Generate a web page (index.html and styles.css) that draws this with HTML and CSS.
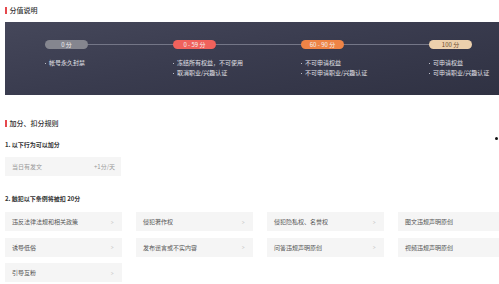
FILE: index.html
```html
<!DOCTYPE html>
<html lang="zh">
<head>
<meta charset="utf-8">
<link rel="stylesheet" href="styles.css">
</head>
<body>
<div class="page">
  <h2 class="sec-title first">分值说明</h2>
  <div class="panel">
    <div class="track"></div>
    <div class="stage">
      <span class="pill p-gray">0 分</span>
      <ul class="bullets">
        <li>帐号永久封禁</li>
      </ul>
    </div>
    <div class="stage">
      <span class="pill p-red">0 - 59 分</span>
      <ul class="bullets">
        <li>冻结所有权益，不可使用</li>
        <li>取消职业/兴趣认证</li>
      </ul>
    </div>
    <div class="stage">
      <span class="pill p-orange">60 - 90 分</span>
      <ul class="bullets">
        <li>不可申请权益</li>
        <li>不可申请职业/兴趣认证</li>
      </ul>
    </div>
    <div class="stage">
      <span class="pill p-gold">100 分</span>
      <ul class="bullets">
        <li>可申请权益</li>
        <li>可申请职业/兴趣认证</li>
      </ul>
    </div>
  </div>

  <h2 class="sec-title second">加分、扣分规则</h2>
  <h3 class="sub first-sub">1. 以下行为可以加分</h3>
  <div class="bonus">
    <span>当日有发文</span>
    <span>+1分/天</span>
  </div>

  <h3 class="sub second-sub">2. 触犯以下条例将被扣 20分</h3>
  <div class="rules">
    <div class="rule"><span>违反法律法规和相关政策</span><i class="chev">&gt;</i></div>
    <div class="rule"><span>侵犯著作权</span><i class="chev">&gt;</i></div>
    <div class="rule"><span>侵犯隐私权、名誉权</span><i class="chev">&gt;</i></div>
    <div class="rule"><span>图文违规声明原创</span><i class="chev">&gt;</i></div>
    <div class="rule"><span>诱导低俗</span><i class="chev">&gt;</i></div>
    <div class="rule"><span>发布谣言或不实内容</span><i class="chev">&gt;</i></div>
    <div class="rule"><span>问答违规声明原创</span><i class="chev">&gt;</i></div>
    <div class="rule"><span>视频违规声明原创</span><i class="chev">&gt;</i></div>
    <div class="rule"><span>引导互粉</span><i class="chev">&gt;</i></div>
  </div>
</div>
<span class="cursor-dot"></span>
</body>
</html>
```

FILE: styles.css
```css
html, body {
  margin: 0;
  padding: 0;
  overflow: hidden;
  background: #ffffff;
}

body {
  width: 499px;
  height: 284px;
  position: relative;
  font-family: "Noto Sans CJK SC", "Noto Sans", sans-serif;
  color: #333;
}

.page {
  width: 510px;
  padding-left: 5px;
}

.sec-title {
  margin: 0;
  font-size: 7px;
  line-height: 10px;
  height: 10px;
  font-weight: 500;
  color: #333;
  display: flex;
  align-items: center;
  gap: 3px;
}

.sec-title::before {
  content: "";
  width: 1.5px;
  height: 7px;
  background: #e5484d;
}

.sec-title.first {
  padding-top: 5px;
}

.sec-title.second {
  margin-top: 23px;
}

.panel {
  margin-top: 7px;
  height: 73px;
  box-sizing: border-box;
  padding: 18px 0 0 40px;
  background: linear-gradient(170deg, #45475a 0%, #3a3c4f 45%, #2f3142 100%);
  display: grid;
  grid-template-columns: repeat(4, 128px);
  position: relative;
}

.track {
  position: absolute;
  left: 61px;
  width: 385px;
  top: 22px;
  height: 1px;
  background: #747687;
}

.stage {
  position: relative;
}

.pill {
  display: flex;
  align-items: center;
  justify-content: center;
  width: 43px;
  height: 9px;
  border-radius: 5px;
  font-size: 6px;
  line-height: 9px;
  color: #f2f2f2;
}

.p-gray { background: #85868f; }
.p-red { background: #f0625c; }
.p-orange { background: #ef8446; }
.p-gold { background: #ecd0ad; color: #6b4c2e; }

.bullets {
  list-style: none;
  margin: 9px 0 0 0;
  padding: 0;
}

.bullets li {
  font-size: 6px;
  line-height: 10px;
  color: #e2e2e8;
  display: flex;
  align-items: center;
  gap: 3px;
  white-space: nowrap;
}

.bullets li::before {
  content: "";
  width: 1px;
  height: 1px;
  background: #b9bac4;
}

.sub {
  margin: 0;
  font-size: 6px;
  line-height: 10px;
  font-weight: 700;
  color: #333;
}

.first-sub {
  margin-top: 11.5px;
}

.second-sub {
  margin-top: 18px;
}

.bonus {
  margin-top: 7.5px;
  width: 116px;
  height: 19px;
  box-sizing: border-box;
  padding: 0 6px 0 7px;
  background: #f5f5f5;
  display: flex;
  align-items: center;
  justify-content: space-between;
  font-size: 6px;
  color: #999;
}

.rules {
  margin-top: 8px;
  display: grid;
  grid-template-columns: repeat(4, 117px);
  grid-auto-rows: 19px;
  column-gap: 14px;
  row-gap: 6.5px;
}

.rule {
  background: #f5f5f5;
  display: flex;
  align-items: center;
  justify-content: space-between;
  padding: 0 8px 0 7px;
  font-size: 6px;
  color: #555;
}

.chev {
  font-style: normal;
  font-family: "DejaVu Sans", sans-serif;
  font-size: 5px;
  color: #c4c4c4;
  transform: scaleX(0.7);
}

.cursor-dot {
  position: absolute;
  left: 495px;
  top: 136.5px;
  width: 3px;
  height: 3px;
  border-radius: 50%;
  background: #111;
}
```
